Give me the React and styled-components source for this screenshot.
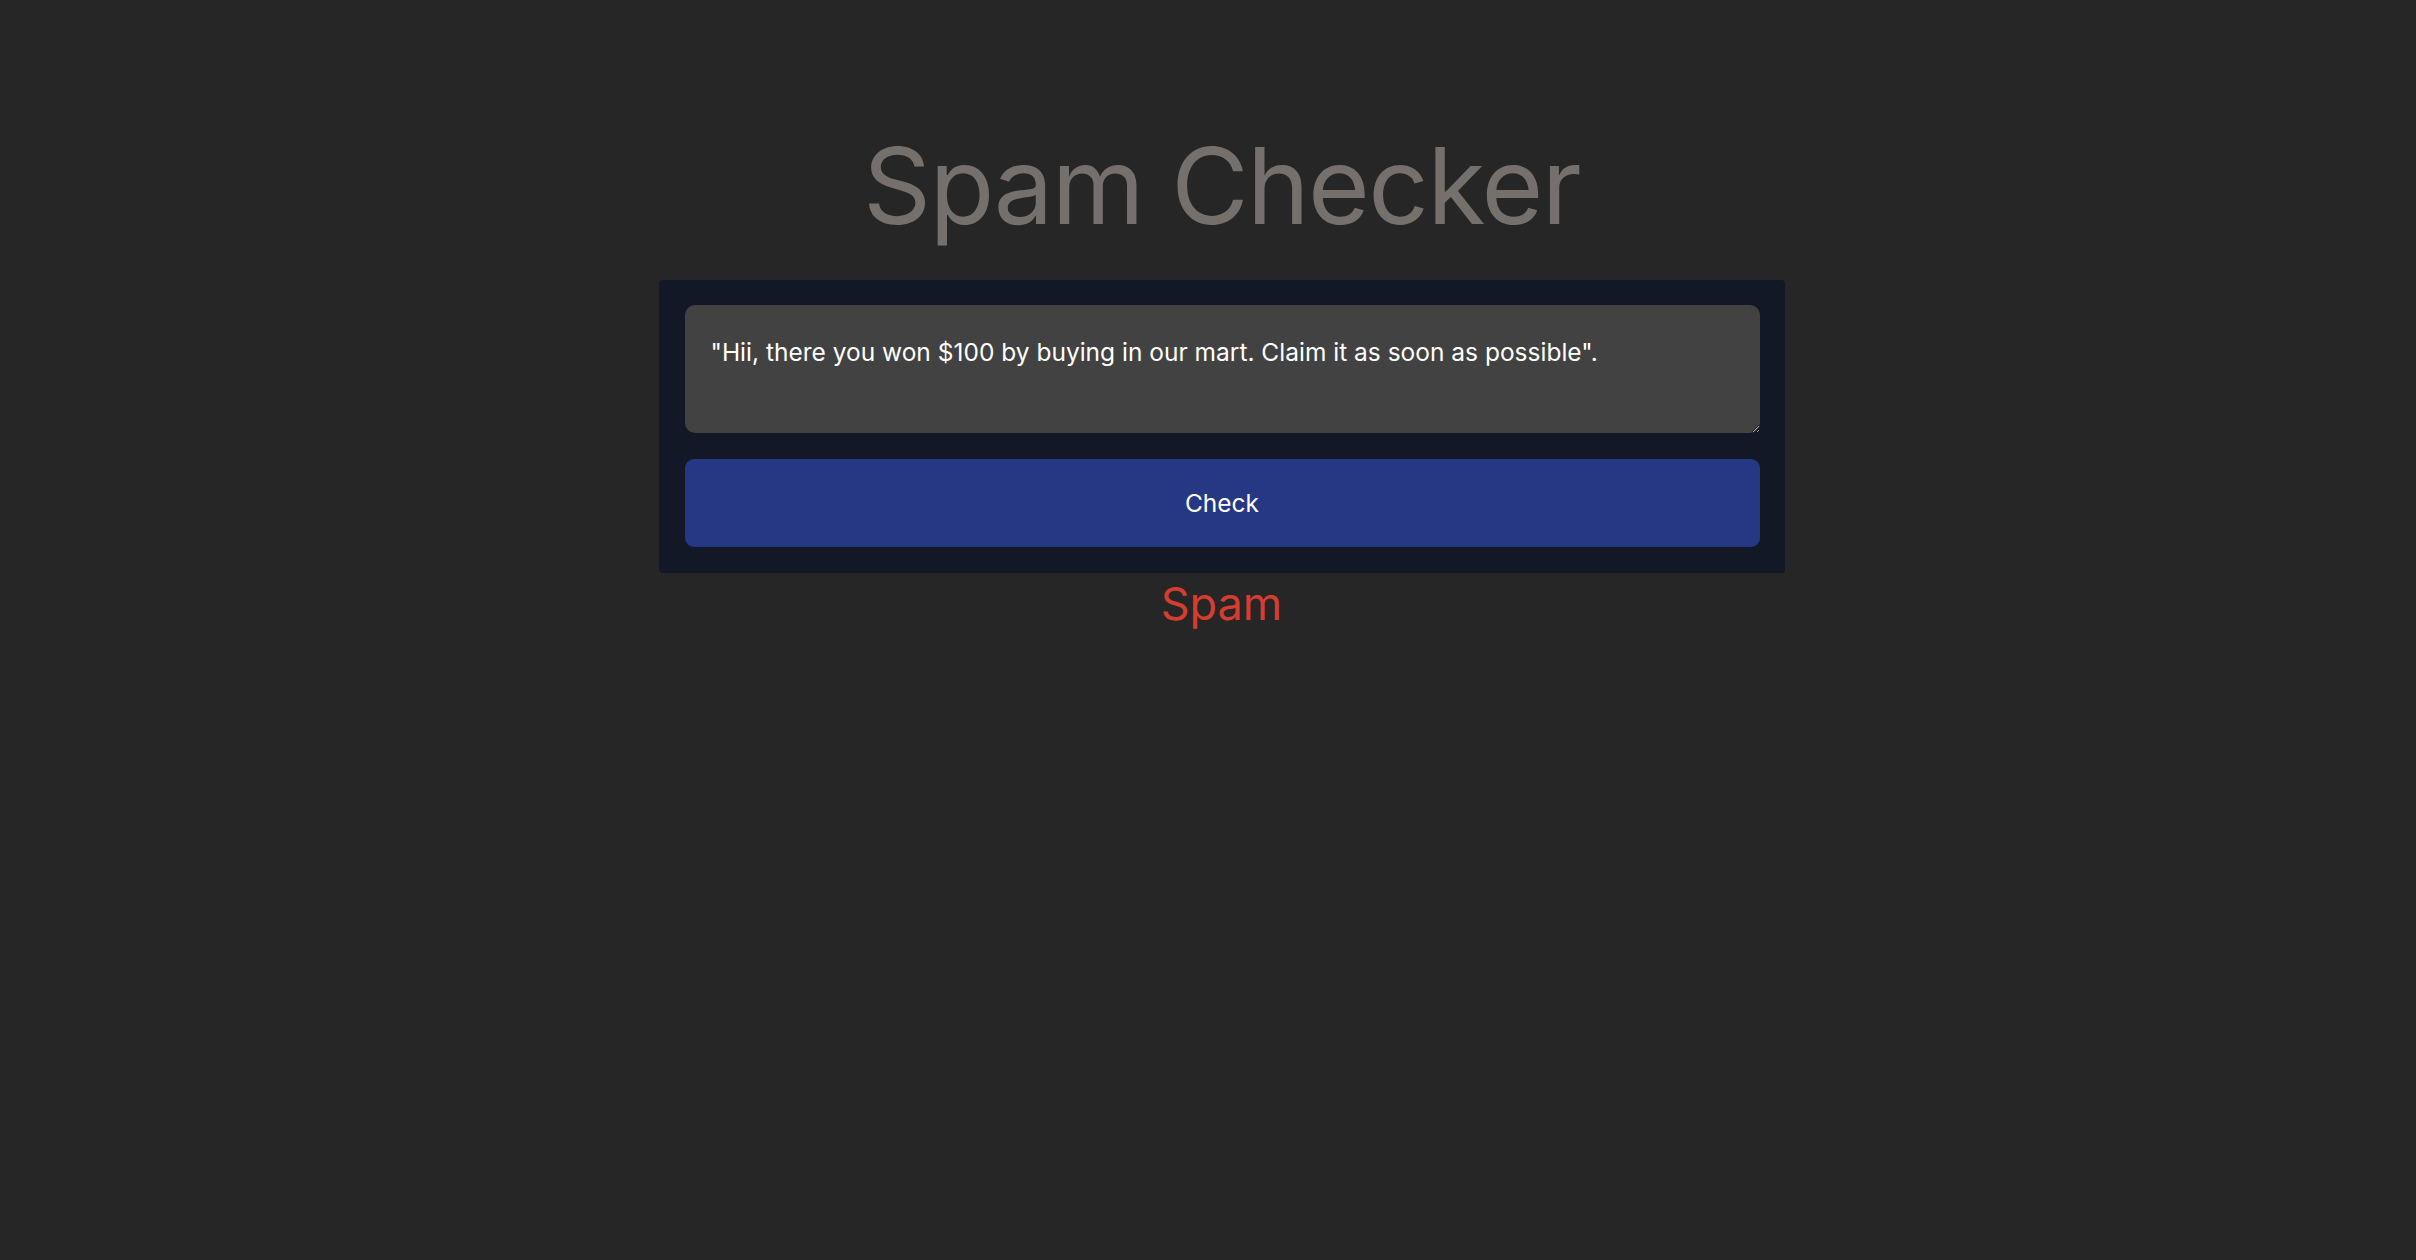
import React from "react";
import styled, { createGlobalStyle } from "styled-components";

const GlobalStyle = createGlobalStyle`
  html, body { margin: 0; padding: 0; background: #262626; }
  body { font-family: Inter, "Noto Sans", sans-serif; }
  * { box-sizing: border-box; }
`;

const Page = styled.main`
  min-height: 100vh;
  background: #262626;
  display: flex;
  flex-direction: column;
  align-items: center;
  padding: 122px 0 0 27px;
`;

const Title = styled.h1`
  margin: 0 0 31px;
  font-family: Inter, "Noto Sans", sans-serif;
  font-weight: 400;
  font-size: 106px;
  line-height: 1.2;
  color: #75706b;
  letter-spacing: -1.6px;
`;

const Card = styled.section`
  width: 1126px;
  background: #131827;
  border-radius: 4px;
  padding: 25px 25px 26px 26px;
  display: flex;
  flex-direction: column;
  gap: 26px;
`;

const MessageInput = styled.textarea`
  width: 100%;
  height: 128px;
  background: #424242;
  color: #ffffff;
  border: none;
  outline: none;
  border-radius: 10px;
  padding: 29px 26px 20px;
  font-family: Inter, "Noto Sans", sans-serif;
  font-size: 24.5px;
  line-height: 1.47;
  resize: vertical;
`;

const CheckButton = styled.button`
  width: 100%;
  height: 88px;
  background: #263884;
  color: #ffffff;
  border: none;
  border-radius: 9px;
  font-family: Inter, "Noto Sans", sans-serif;
  font-size: 24.5px;
  cursor: pointer;
`;

const Result = styled.p`
  margin: 2px 0 0;
  font-family: Inter, "Noto Sans", sans-serif;
  font-size: 45px;
  line-height: 1.3;
  color: ${(p) => (p.$spam ? "#d63c30" : "#4caf50")};
`;

export default function App() {
  const [text, setText] = React.useState(
    '"Hii, there you won $100 by buying in our mart. Claim it as soon as possible".'
  );
  return (
    <>
      <GlobalStyle />
      <Page>
        <Title>Spam Checker</Title>
        <Card>
          <MessageInput value={text} onChange={(e) => setText(e.target.value)} />
          <CheckButton type="button">Check</CheckButton>
        </Card>
        <Result $spam>Spam</Result>
      </Page>
    </>
  );
}
